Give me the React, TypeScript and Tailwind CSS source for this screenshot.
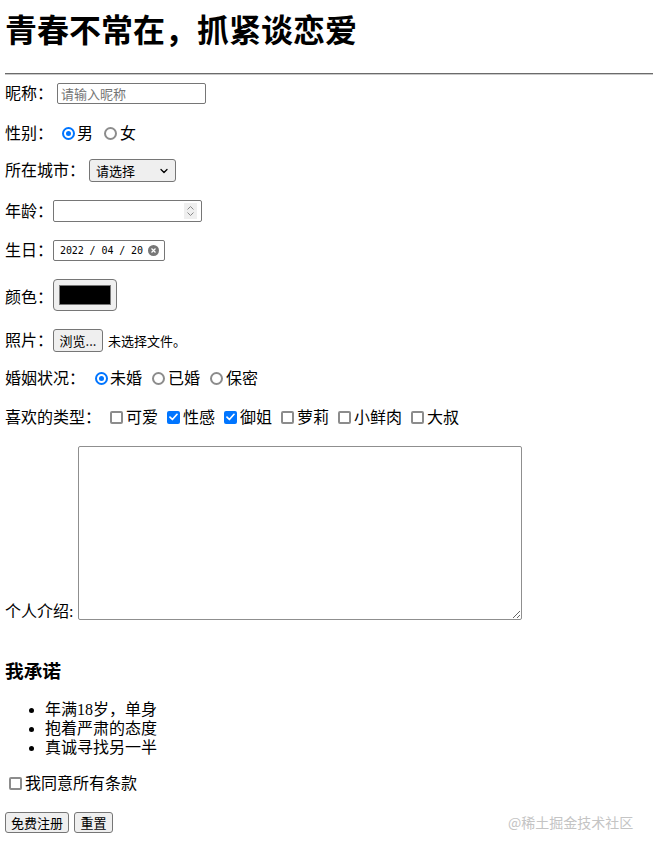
// Registration form page: a plain, browser-default looking form
// (title, hr, labelled inputs, promise list, submit/reset buttons)
// with a faint watermark in the bottom-right corner.

const types = [
  { label: "可爱", checked: false },
  { label: "性感", checked: true },
  { label: "御姐", checked: true },
  { label: "萝莉", checked: false },
  { label: "小鲜肉", checked: false },
  { label: "大叔", checked: false },
];

const promises = ["年满18岁，单身", "抱着严肃的态度", "真诚寻找另一半"];

// ── small control pieces, drawn to look like Chrome's defaults ──
function Radio({ checked }: { checked?: boolean }) {
  if (checked) {
    return (
      <span className="flex h-[13px] w-[13px] shrink-0 items-center justify-center rounded-full border-2 border-[#0075ff] bg-white">
        <span className="h-[5px] w-[5px] rounded-full bg-[#0075ff]" />
      </span>
    );
  }
  return <span className="h-[13px] w-[13px] shrink-0 rounded-full border-2 border-[#8c8c8c] bg-white" />;
}

function Check({ checked }: { checked?: boolean }) {
  if (checked) {
    return (
      <span className="flex h-[13px] w-[13px] shrink-0 items-center justify-center rounded-[2px] bg-[#0075ff]">
        <svg width="9" height="8" viewBox="0 0 9 8" fill="none">
          <path d="M1 4.2L3.4 6.5L8 1.3" stroke="#fff" strokeWidth="1.7" strokeLinecap="round" strokeLinejoin="round" />
        </svg>
      </span>
    );
  }
  return <span className="h-[13px] w-[13px] shrink-0 rounded-[2px] border-2 border-[#8c8c8c] bg-white" />;
}

const ctrl = "font-['Noto_Sans_CJK_SC',sans-serif] text-[13px] leading-none";

export default function App() {
  return (
    <div className="relative min-h-[851px] bg-white pl-[5px] pt-[13px] text-[16px] leading-[19px] text-black font-['Liberation_Serif','Noto_Sans_CJK_SC',serif]">
      <h1 className="h-[36px] text-[32px] font-bold leading-[36px]">
        青春不常在，抓紧谈恋爱
      </h1>

      <div className="mt-[24px] h-[2px] border-t border-b border-t-[#6b6b6b] border-b-[#c9c9c9]" />

      {/* 昵称 */}
      <div className="mt-[8px] flex h-[21px] items-center">
        <span>昵称：</span>
        <input
          placeholder="请输入昵称"
          className={`${ctrl} ml-[4px] h-[21px] w-[149px] rounded-[2px] border border-[#767676] px-[3px] placeholder:text-[#757575]`}
        />
      </div>

      {/* 性别 */}
      <div className="mt-[18px] flex h-[22px] items-center">
        <span>性别：</span>
        <span className="ml-[9px] flex"><Radio checked /></span>
        <span className="ml-[2px]">男</span>
        <span className="ml-[11px] flex"><Radio /></span>
        <span className="ml-[3px]">女</span>
      </div>

      {/* 所在城市 */}
      <div className="mt-[15px] flex h-[23px] items-center">
        <span>所在城市：</span>
        <div className={`${ctrl} ml-[4px] flex h-[23px] w-[87px] items-center justify-between rounded-[3px] border border-[#767676] bg-[#efefef] pl-[6px] pr-[6px]`}>
          <span>请选择</span>
          <svg width="10" height="10" viewBox="0 0 10 10" fill="none">
            <path d="M2 3.5L5 6.5L8 3.5" stroke="#000" strokeWidth="1.3" strokeLinecap="round" strokeLinejoin="round" />
          </svg>
        </div>
      </div>

      {/* 年龄 */}
      <div className="mt-[18px] flex h-[22px] items-center">
        <span>年龄：</span>
        <div className="flex h-[22px] w-[149px] items-center justify-end rounded-[2px] border border-[#767676] pr-[4px]">
          <div className="flex h-[16px] w-[13px] flex-col items-center justify-center gap-[2px] bg-[#efefef]">
            <svg width="7" height="4" viewBox="0 0 7 4" fill="none">
              <path d="M0.5 3.5L3.5 0.5L6.5 3.5" stroke="#888" strokeWidth="1" />
            </svg>
            <svg width="7" height="4" viewBox="0 0 7 4" fill="none">
              <path d="M0.5 0.5L3.5 3.5L6.5 0.5" stroke="#888" strokeWidth="1" />
            </svg>
          </div>
        </div>
      </div>

      {/* 生日 */}
      <div className="mt-[18px] flex h-[21px] items-center">
        <span>生日：</span>
        <div className="flex h-[21px] w-[112px] items-center rounded-[2px] border border-[#767676] pl-[6px]">
          <span className="font-['DejaVu_Sans_Mono',monospace] text-[10px] tracking-[-0.1px]">2022 / 04 / 20</span>
          <span className="ml-[5px] flex h-[11px] w-[11px] items-center justify-center rounded-full bg-[#777]">
            <svg width="5" height="5" viewBox="0 0 5 5">
              <path d="M0.5 0.5L4.5 4.5M4.5 0.5L0.5 4.5" stroke="#fff" strokeWidth="1.2" />
            </svg>
          </span>
        </div>
      </div>

      {/* 颜色 */}
      <div className="mt-[18px] flex h-[32px] items-center">
        <span className="mt-[4px]">颜色：</span>
        <div className="flex h-[32px] w-[64px] items-center justify-center rounded-[4px] border border-[#767676] bg-[#efefef]">
          <div className="h-[20px] w-[52px] border border-[#777] bg-black" />
        </div>
      </div>

      {/* 照片 */}
      <div className="mt-[18px] flex h-[23px] items-center">
        <span>照片：</span>
        <button className={`${ctrl} h-[23px] w-[50px] rounded-[3px] border border-[#767676] bg-[#efefef]`}>
          浏览...
        </button>
        <span className={`${ctrl} ml-[5px]`}>未选择文件。</span>
      </div>

      {/* 婚姻状况 */}
      <div className="mt-[15px] flex h-[22px] items-center">
        <span>婚姻状况：</span>
        <span className="ml-[10px] flex"><Radio checked /></span>
        <span className="ml-[2px]">未婚</span>
        <span className="ml-[10px] flex"><Radio /></span>
        <span className="ml-[3px]">已婚</span>
        <span className="ml-[10px] flex"><Radio /></span>
        <span className="ml-[3px]">保密</span>
      </div>

      {/* 喜欢的类型 */}
      <div className="mt-[17px] flex h-[22px] items-center">
        <span>喜欢的类型：</span>
        {types.map((t) => (
          <span key={t.label} className="flex items-center">
            <span className="ml-[9px] flex"><Check checked={t.checked} /></span>
            <span className="ml-[3px]">{t.label}</span>
          </span>
        ))}
      </div>

      {/* 个人介绍 */}
      <div className="mt-[18px] flex items-end">
        <span className="mb-[-1px] w-[73px]">个人介绍:</span>
        <textarea className="h-[174px] w-[444px] resize rounded-[2px] border border-[#8f8f8f]" />
      </div>

      <h3 className="mt-[40px] flex h-[22px] items-center text-[18.7px] font-bold">我承诺</h3>

      <ul className="mt-[18px] list-disc pl-[40px]">
        {promises.map((p) => (
          <li key={p}>{p}</li>
        ))}
      </ul>

      <div className="mt-[15px] flex h-[22px] items-center">
        <span className="ml-[4px] flex"><Check /></span>
        <span className="ml-[3px]">我同意所有条款</span>
      </div>

      <div className="mt-[18px] flex h-[21px] items-center gap-[5px]">
        <button className={`${ctrl} h-[21px] w-[64px] rounded-[3px] border border-[#767676] bg-[#efefef]`}>
          免费注册
        </button>
        <button className={`${ctrl} h-[21px] w-[39px] rounded-[3px] border border-[#767676] bg-[#efefef]`}>
          重置
        </button>
      </div>

      {/* watermark overlay */}
      <div className="absolute left-[508px] top-[813px] font-['Noto_Sans_CJK_SC',sans-serif] text-[14px] leading-[18px] text-[#c4c4c4]">
        @稀土掘金技术社区
      </div>
    </div>
  );
}
